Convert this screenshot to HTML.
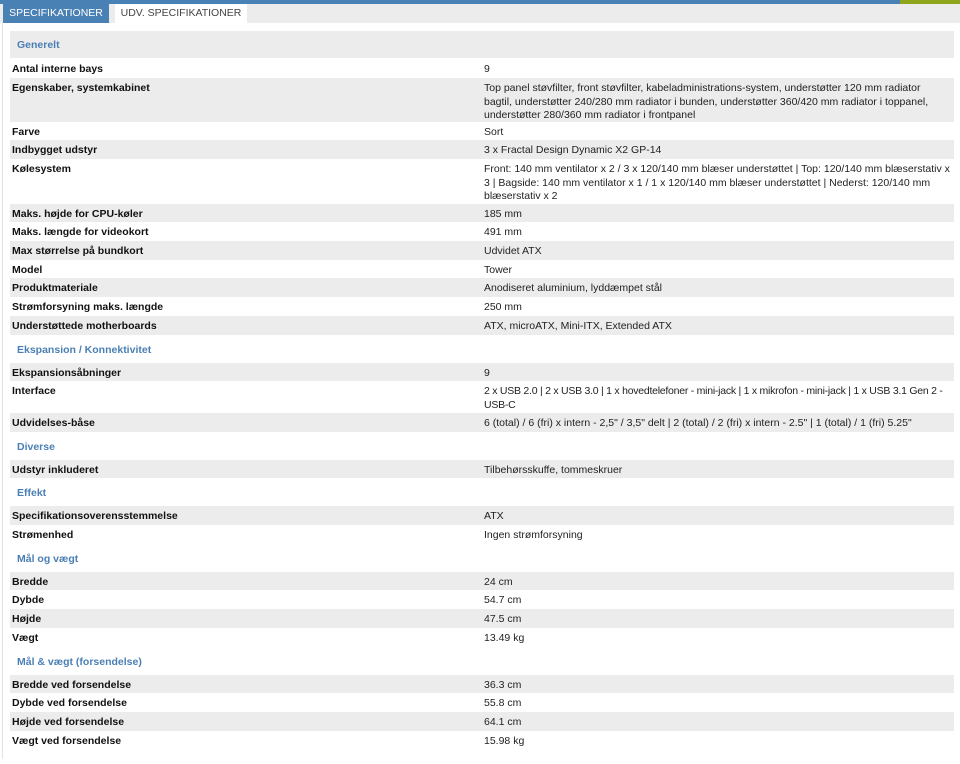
<!DOCTYPE html>
<html><head><meta charset="utf-8"><style>
*{margin:0;padding:0;box-sizing:border-box}
body{width:960px;height:764px;background:#fff;font-family:"Liberation Sans",sans-serif;font-size:10.5px;color:#222;position:relative;overflow:hidden}
.top{position:absolute;left:0;top:0;width:960px;height:4px;background:#4a81b4}
.top2{position:absolute;left:900px;top:0;width:60px;height:4px;background:#8fa51c}
.tabbar{position:absolute;left:0;top:4px;width:960px;height:19px;background:#ececec}
.tab{position:absolute;top:4px;height:19px;font-size:10.5px;line-height:17px;padding-top:1px;text-align:center}
.t1{left:3px;width:106px;background:#4a81b4;color:#fff}
.t2{left:115px;width:132px;background:#fff;color:#444}
.lb{position:absolute;left:2px;top:23px;width:1px;height:736px;background:#e2e2e2}
.r{position:absolute;left:10px;width:944px}
.g{background:#ececec}
.l{position:absolute;left:2px;top:4px;font-weight:bold;line-height:13.5px;color:#111}
.v{position:absolute;left:474px;top:4px;width:475px;line-height:13.5px;white-space:nowrap}
.h{position:absolute;left:7px;color:#4a7fb5;font-weight:bold;font-size:10.5px}
</style></head><body>
<div class="top"></div><div class="top2"></div>
<div class="tabbar"></div>
<div class="tab t1">SPECIFIKATIONER</div>
<div class="tab t2">UDV. SPECIFIKATIONER</div>
<div class="lb"></div>

<div class="r g" style="top:31px;height:27px"><div class="h" style="top:8px">Generelt</div></div>
<div class="r" style="top:59px;height:19px"><div class="l">Antal interne bays</div><div class="v">9</div></div>
<div class="r g" style="top:78px;height:44px"><div class="l">Egenskaber, systemkabinet</div><div class="v">Top panel støvfilter, front støvfilter, kabeladministrations-system, understøtter 120 mm radiator<br>bagtil, understøtter 240/280 mm radiator i bunden, understøtter 360/420 mm radiator i toppanel,<br>understøtter 280/360 mm radiator i frontpanel</div></div>
<div class="r" style="top:122px;height:18px"><div class="l">Farve</div><div class="v">Sort</div></div>
<div class="r g" style="top:140px;height:19px"><div class="l">Indbygget udstyr</div><div class="v">3 x Fractal Design Dynamic X2 GP-14</div></div>
<div class="r" style="top:159px;height:45px"><div class="l">Kølesystem</div><div class="v">Front: 140 mm ventilator x 2 / 3 x 120/140 mm blæser understøttet | Top: 120/140 mm blæserstativ x<br>3 | Bagside: 140 mm ventilator x 1 / 1 x 120/140 mm blæser understøttet | Nederst: 120/140 mm<br>blæserstativ x 2</div></div>
<div class="r g" style="top:204px;height:18px"><div class="l">Maks. højde for CPU-køler</div><div class="v">185 mm</div></div>
<div class="r" style="top:222px;height:19px"><div class="l">Maks. længde for videokort</div><div class="v">491 mm</div></div>
<div class="r g" style="top:241px;height:19px"><div class="l">Max størrelse på bundkort</div><div class="v">Udvidet ATX</div></div>
<div class="r" style="top:260px;height:18px"><div class="l">Model</div><div class="v">Tower</div></div>
<div class="r g" style="top:278px;height:19px"><div class="l">Produktmateriale</div><div class="v">Anodiseret aluminium, lyddæmpet stål</div></div>
<div class="r" style="top:297px;height:19px"><div class="l">Strømforsyning maks. længde</div><div class="v">250 mm</div></div>
<div class="r g" style="top:316px;height:19px"><div class="l">Understøttede motherboards</div><div class="v">ATX, microATX, Mini-ITX, Extended ATX</div></div>

<div class="r" style="top:335px;height:28px"><div class="h" style="top:9px">Ekspansion / Konnektivitet</div></div>
<div class="r g" style="top:363px;height:18px"><div class="l">Ekspansionsåbninger</div><div class="v">9</div></div>
<div class="r" style="top:381px;height:32px"><div class="l">Interface</div><div class="v" style="letter-spacing:-0.25px">2 x USB 2.0 | 2 x USB 3.0 | 1 x hovedtelefoner - mini-jack | 1 x mikrofon - mini-jack | 1 x USB 3.1 Gen 2 -<br>USB-C</div></div>
<div class="r g" style="top:413px;height:19px"><div class="l">Udvidelses-båse</div><div class="v">6 (total) / 6 (fri) x intern - 2,5" / 3,5" delt | 2 (total) / 2 (fri) x intern - 2.5" | 1 (total) / 1 (fri) 5.25"</div></div>

<div class="r" style="top:432px;height:28px"><div class="h" style="top:9px">Diverse</div></div>
<div class="r g" style="top:460px;height:18px"><div class="l">Udstyr inkluderet</div><div class="v">Tilbehørsskuffe, tommeskruer</div></div>

<div class="r" style="top:478px;height:28px"><div class="h" style="top:9px">Effekt</div></div>
<div class="r g" style="top:506px;height:19px"><div class="l">Specifikationsoverensstemmelse</div><div class="v">ATX</div></div>
<div class="r" style="top:525px;height:18px"><div class="l">Strømenhed</div><div class="v">Ingen strømforsyning</div></div>

<div class="r" style="top:543px;height:29px"><div class="h" style="top:10px">Mål og vægt</div></div>
<div class="r g" style="top:572px;height:18px"><div class="l">Bredde</div><div class="v">24 cm</div></div>
<div class="r" style="top:590px;height:19px"><div class="l">Dybde</div><div class="v">54.7 cm</div></div>
<div class="r g" style="top:609px;height:19px"><div class="l">Højde</div><div class="v">47.5 cm</div></div>
<div class="r" style="top:628px;height:19px"><div class="l">Vægt</div><div class="v">13.49 kg</div></div>

<div class="r" style="top:647px;height:28px"><div class="h" style="top:9px">Mål &amp; vægt (forsendelse)</div></div>
<div class="r g" style="top:675px;height:18px"><div class="l">Bredde ved forsendelse</div><div class="v">36.3 cm</div></div>
<div class="r" style="top:693px;height:19px"><div class="l">Dybde ved forsendelse</div><div class="v">55.8 cm</div></div>
<div class="r g" style="top:712px;height:19px"><div class="l">Højde ved forsendelse</div><div class="v">64.1 cm</div></div>
<div class="r" style="top:731px;height:19px"><div class="l">Vægt ved forsendelse</div><div class="v">15.98 kg</div></div>
</body></html>
